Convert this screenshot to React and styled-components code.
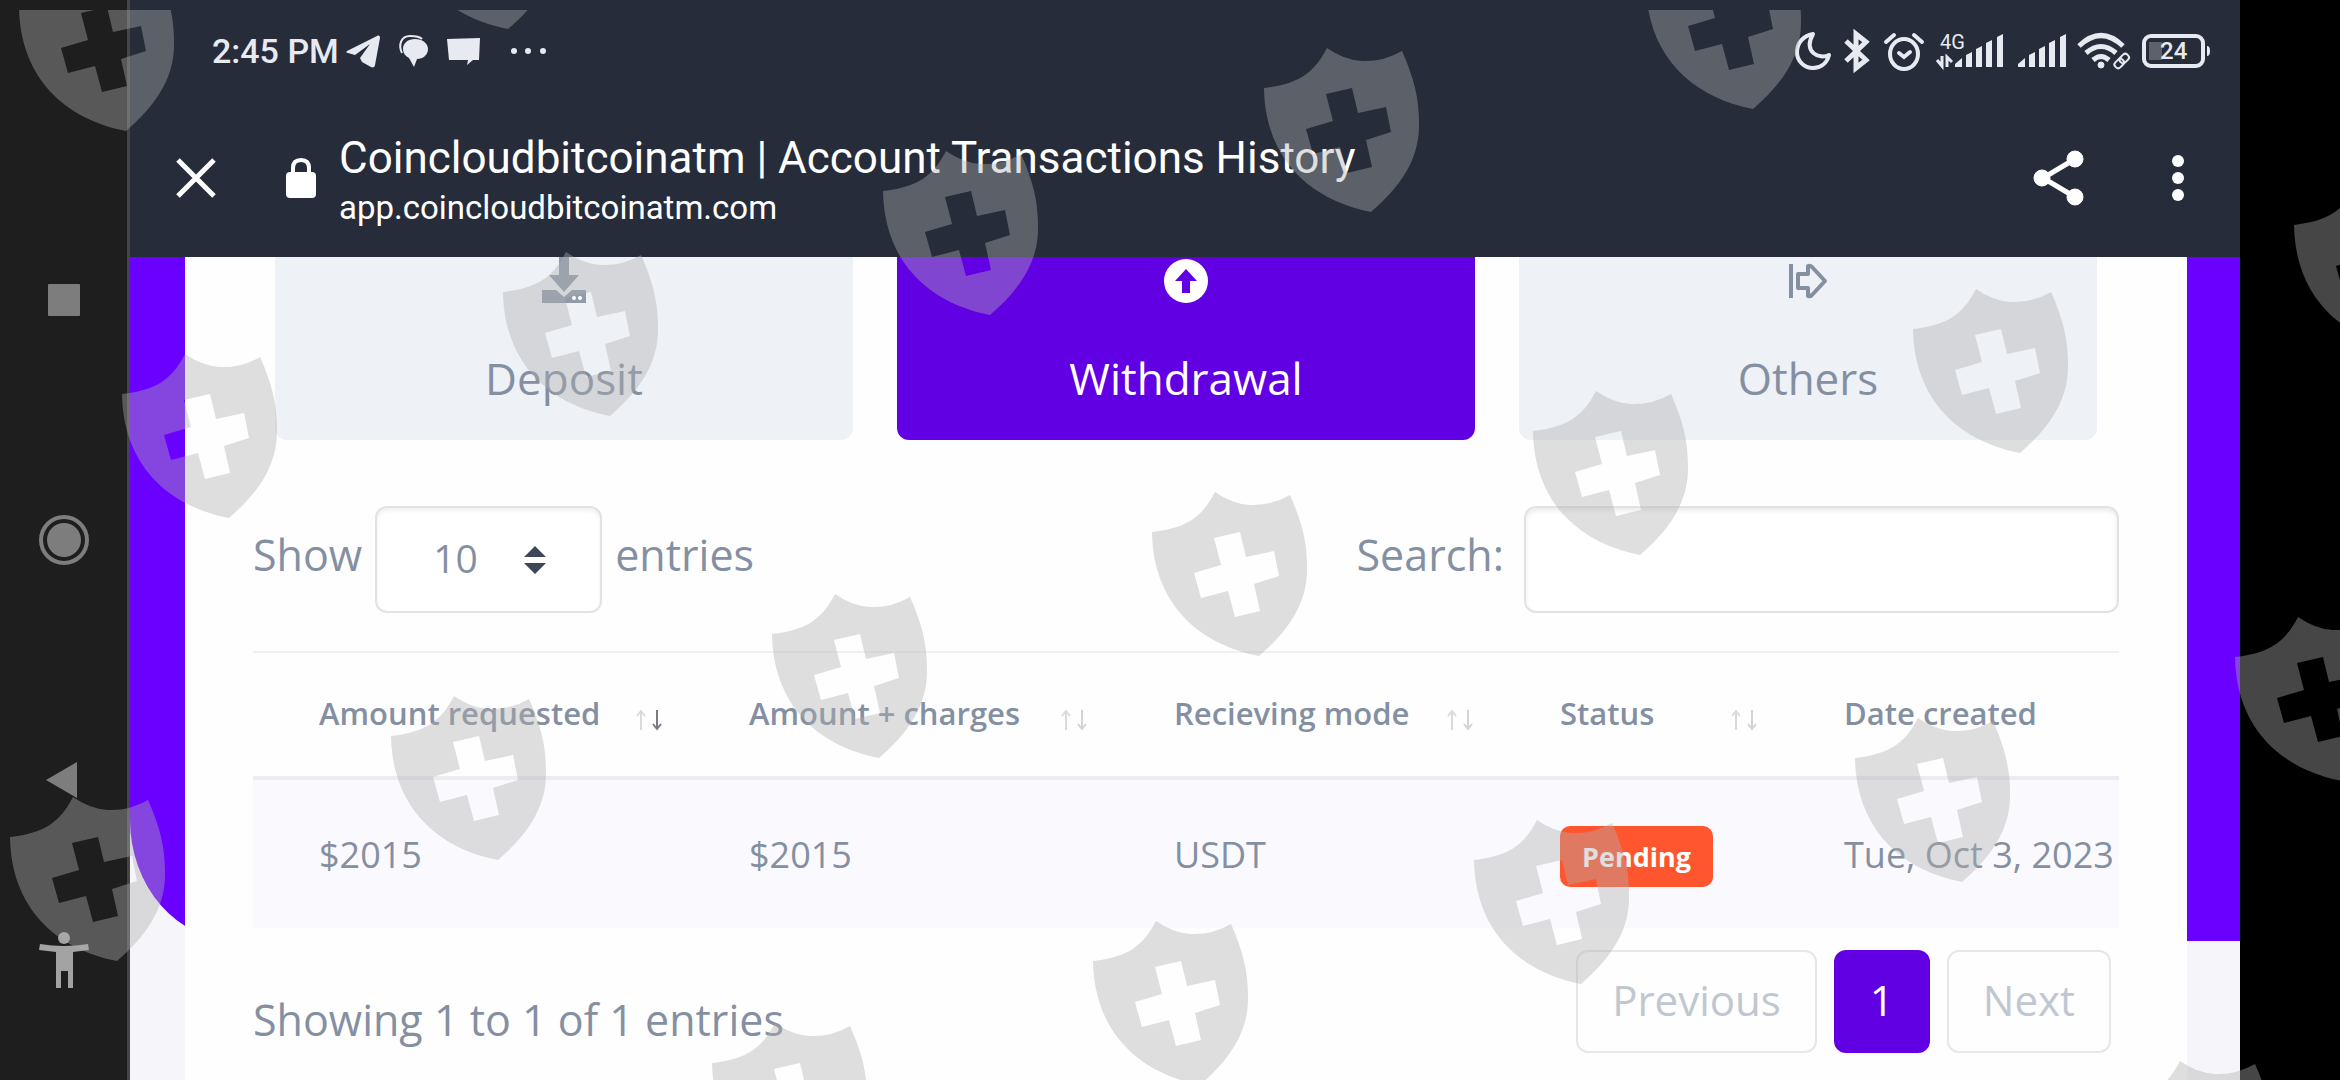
import React, { useState } from 'react'
import styled, { createGlobalStyle } from 'styled-components'

const GlobalStyle = createGlobalStyle`
    * {
        box-sizing: border-box;
    }

    body {
        margin: 0;
        background: #000;
        color: #8490a2;
        font-family: "Open Sans", "Noto Sans", sans-serif;
    }

    button, input, select {
        font: inherit;
        color: inherit;
    }
`

const Screen = styled.div`
    display: flex;
    min-height: 100vh;
    padding-right: 100px;
    overflow: hidden;
`

const Rail = styled.nav`
    flex: 0 0 130px;
    display: flex;
    flex-direction: column;
    padding-top: 180px;
    background: #1e1e1e;
    border-right: 3px solid #454545;
`

const RailButton = styled.button`
    display: flex;
    align-items: center;
    justify-content: center;
    height: ${props => props.$short ? '120px' : '240px'};
    padding: 0;
    border: 0;
    background: none;
`

const Main = styled.div`
    flex: 1;
    min-width: 0;
    display: flex;
    flex-direction: column;
`

const Header = styled.header`
    height: 257px;
    background: #262c3a;
    color: #fff;
    font-family: Roboto, sans-serif;
`

const StatusBar = styled.div`
    display: flex;
    justify-content: space-between;
    height: 102px;
    padding: 0 30px 0 82px;
    color: #e8eaf2;
`

const StatusGroup = styled.div`
    display: flex;
    align-items: center;
    gap: ${props => props.$gap};

    svg {
        display: block;
        overflow: visible;
    }
`

const Clock = styled.span`
    margin-right: -12px;
    font-size: 34px;
    font-weight: 500;
    line-height: 40px;
`

const AddressBar = styled.div`
    display: flex;
    align-items: center;
    height: 155px;
    padding: 0 0 4px 45px;
`

const BarButton = styled.button`
    display: flex;
    align-items: center;
    justify-content: center;
    width: ${props => props.$width};
    height: 80px;
    padding: 0;
    border: 0;
    background: none;
`

const MenuButton = styled(BarButton)`
    margin-left: 31px;
`

const LockIcon = styled.svg`
    margin: 0 22px 0 68px;
`

const PageInfo = styled.div`
    flex: 1;
    min-width: 0;
    padding-top: 8px;
    white-space: nowrap;
`

const PageTitle = styled.div`
    font-size: 44px;
    line-height: 52px;
`

const PageUrl = styled.div`
    font-size: 33px;
    line-height: 48px;
`

const Content = styled.main`
    flex: 1;
    display: grid;
    background: #f5f5fa;
`

const Hero = styled.div`
    grid-area: 1 / 1;
    height: 684px;
    background: #6a00ff;
    border-bottom-left-radius: 106px 121px;
`

const Card = styled.section`
    grid-area: 1 / 1;
    margin: 0 53px 0 55px;
    padding: 0 68px 27px;
    background: #fefefe;
`

const Tiles = styled.div`
    display: grid;
    grid-template-columns: repeat(3, 1fr);
    gap: 44px;
    padding: 0 22px;
`

const Tile = styled.button`
    display: flex;
    flex-direction: column;
    align-items: center;
    height: 183px;
    padding: 0;
    border: 0;
    border-radius: 0 0 12px 12px;
    background: ${props => props.$active ? '#6200e4' : '#eef1f6'};
    color: ${props => props.$active ? '#fff' : '#8490a2'};
    font-size: 44px;
    line-height: 60px;

    svg {
        display: block;
        margin-bottom: 45px;
    }
`

const Controls = styled.div`
    display: flex;
    justify-content: space-between;
    margin: 66px 0 38px;
    font-size: 43px;
`

const Control = styled.label`
    display: flex;
    align-items: center;
    gap: ${props => props.$gap};
`

const ControlText = styled.span`
    padding-bottom: 10px;
`

const SelectBox = styled.span`
    display: grid;
    align-items: center;

    svg {
        grid-area: 1 / 1;
        justify-self: end;
        margin-right: 56px;
        pointer-events: none;
    }
`

const Select = styled.select`
    grid-area: 1 / 1;
    width: 227px;
    height: 107px;
    padding: 0 56px 4px;
    border: 2px solid #e2e2e4;
    border-radius: 12px;
    background: #fff;
    box-shadow: inset 0 3px 4px rgba(0, 0, 0, 0.06);
    font-size: 39px;
    appearance: none;
`

const SearchInput = styled.input`
    width: 595px;
    height: 107px;
    padding: 0 32px;
    border: 2px solid #e2e2e4;
    border-radius: 12px;
    background: #fff;
    box-shadow: inset 0 3px 4px rgba(0, 0, 0, 0.08);
    font-size: 39px;
`

const Table = styled.table`
    width: 100%;
    table-layout: fixed;
    border-spacing: 0;
    text-align: left;
    white-space: nowrap;
`

const Col = styled.col`
    width: ${props => props.$width};
`

const Th = styled.th`
    height: 129px;
    padding: 0 20px 0 66px;
    border-top: 2px solid #f0f0f3;
    border-bottom: 4px solid #ecedf3;
    font-size: 31px;
    font-weight: 600;
`

const HeadCell = styled.div`
    display: flex;
    align-items: center;
    justify-content: space-between;
    padding-bottom: 4px;

    svg {
        flex: none;
        margin-top: 14px;
    }
`

const Td = styled.td`
    height: 148px;
    padding: 0 0 0 66px;
    background: #fafafe;
    font-size: 36px;
`

const Badge = styled.span`
    display: block;
    width: max-content;
    margin-top: 4px;
    padding: 0 22px;
    border-radius: 10px;
    background: #ff562f;
    color: #fff;
    font-size: 27px;
    font-weight: 700;
    line-height: 61px;
`

const Footer = styled.div`
    display: flex;
    align-items: flex-end;
    justify-content: space-between;
    padding: 22px 8px 0 0;
`

const Summary = styled.div`
    font-size: 43px;
    line-height: 66px;
`

const Pagination = styled.div`
    display: flex;
    gap: 17px;
`

const PageButton = styled.button`
    height: 103px;
    padding: 0 34px 4px;
    border: 2px solid ${props => props.$active ? '#6200e4' : '#e6e7ea'};
    border-radius: 12px;
    background: ${props => props.$active ? '#6200e4' : '#fefefe'};
    color: ${props => props.$active ? '#fff' : '#c0c7d1'};
    font-size: 42px;
`

const Watermark = styled.svg`
    position: fixed;
    inset: 10px 0 0 0;
    width: 100%;
    height: calc(100% - 10px);
    pointer-events: none;
`

const shields = [
    [19, -33], [401, -135], [1646, -55], [1264, 48], [883, 151],
    [503, 252], [122, 354], [1913, 289], [1533, 391], [1152, 492],
    [772, 594], [391, 696], [10, 797], [1855, 718], [1474, 820],
    [1093, 921], [712, 1023], [2117, 1061], [2294, 185], [2235, 617]
]

const columns = [
    { title: 'Amount requested', width: '430px', sorted: true },
    { title: 'Amount + charges', width: '425px' },
    { title: 'Recieving mode', width: '386px' },
    { title: 'Status', width: '284px' },
    { title: 'Date created', width: '341px', last: true }
]

const SortArrows = ({ sorted }) => (
    <svg width="28" height="22" fill="none" strokeWidth="2">
        <path d="M6 21V2M2 7l4-5 4 5" stroke="#d9dade" />
        <path d="M22 1v19M18 15l4 5 4-5" stroke={sorted ? '#777b82' : '#d2d3d7'} />
    </svg>
)

const SignalBars = () => (
    <svg width="49" height="36" fill="currentColor">
        <path d="M0 34v-3l7-6v9zM11 34V22l6-3v15zM21 34V16l6-3v21zM31 34V10l6-3v27zM42 34V4l6-3v33z" />
    </svg>
)

const StatusLeft = () => (
    <StatusGroup $gap="19px">
        <Clock>2:45 PM</Clock>
        <svg width="34" height="34" fill="currentColor">
            <path d="M1 17 31 2c2-1 3 0 3 2l-5 27c0 2-2 3-4 2l-9-5-2-4 10-14L9 21l-7-2c-2 0-2-1-1-2z" />
        </svg>
        <svg width="29" height="32" fill="currentColor">
            <path d="M16 4c7 0 13 4 13 10 0 6-5 10-11 10l-3 8-5-9C6 21 4 18 4 14 4 8 9 4 16 4z" />
            <path d="M3 18C-1 10 2 1 11 1c5 0 9 0 12 3" fill="none" stroke="currentColor" strokeWidth="2" />
        </svg>
        <svg width="33" height="28" fill="currentColor">
            <path d="m0 2 33-1-1 22h-6l-6 5 1-5H2z" />
        </svg>
        <svg width="58" height="10" fill="currentColor">
            <circle cx="15" cy="5" r="3" />
            <circle cx="29" cy="5" r="3" />
            <circle cx="44" cy="5" r="3" />
        </svg>
    </StatusGroup>
)

const StatusRight = () => (
    <StatusGroup $gap="12px">
        <svg width="36" height="38" fill="none" stroke="currentColor" strokeWidth="4" strokeLinejoin="round">
            <path d="M17 2C7 4 1 11 1 20c0 9 7 16 16 16 8 0 14-5 16-13-10 5-26-3-16-21z" />
        </svg>
        <svg width="28" height="40" fill="none" stroke="currentColor" strokeWidth="5">
            <path d="m2 10 20 19-10 8V3l10 8L2 30" />
        </svg>
        <svg width="42" height="40" fill="none" stroke="currentColor" strokeWidth="4" strokeLinecap="round">
            <ellipse cx="20" cy="23" rx="14" ry="15" />
            <path d="m2 11 8-7M38 11l-8-7M15 22l5 4 6-5" />
        </svg>
        <svg width="68" height="40">
            <text x="2" y="18" fontSize="20" fill="currentColor" fontFamily="Roboto, sans-serif">4G</text>
            <path d="m-1 29 5 6V25M14 31l-5-5v10" fill="none" stroke="currentColor" strokeWidth="3" />
            <g fill="currentColor">
                <path d="M17 36v-3l7-6v9zM28 36V24l6-3v15zM38 36V18l6-3v21zM48 36V12l6-3v27zM59 36V6l6-3v33z" />
            </g>
        </svg>
        <SignalBars />
        <svg width="51" height="38" fill="none" stroke="currentColor" strokeWidth="4">
            <path d="M0 14Q22-7 44 14" strokeWidth="5" />
            <path d="M7 21q15-13 30 0M14 28q8-7 16 0" strokeWidth="5" />
            <circle cx="22" cy="33" r="3" fill="currentColor" strokeWidth="1" />
            <g strokeWidth="2" transform="rotate(-45 42 29)">
                <rect x="34" y="26" width="10" height="7" rx="3" />
                <rect x="41" y="26" width="10" height="7" rx="3" />
            </g>
        </svg>
        <svg width="68" height="32" fill="currentColor">
            <rect x="2" y="1" width="59" height="30" rx="7" fill="none" stroke="currentColor" strokeWidth="4" />
            <path d="M7 7h13v18H7z" fill="#5c616b" />
            <path d="M65 11q3 0 3 5t-3 5z" />
            <text x="18" y="24" fontSize="24" fontWeight="500" fontFamily="Roboto, sans-serif">24</text>
        </svg>
    </StatusGroup>
)

const App = () => {
    const [tab, setTab] = useState('Withdrawal')
    const [length, setLength] = useState('10')
    const [query, setQuery] = useState('')

    return (
        <Screen>
            <GlobalStyle />
            <Rail>
                <RailButton aria-label="Recent apps">
                    <svg width="34" height="34"><rect x="1" y="1" width="32" height="32" rx="1" fill="#7d7d7d" /></svg>
                </RailButton>
                <RailButton aria-label="Home">
                    <svg width="50" height="50">
                        <circle cx="25" cy="25" r="23" fill="none" stroke="#7d7d7d" strokeWidth="4" />
                        <circle cx="25" cy="25" r="17" fill="#7d7d7d" />
                    </svg>
                </RailButton>
                <RailButton aria-label="Back">
                    <svg width="38" height="38"><path d="M1 19 32 1v36z" fill="#7d7d7d" /></svg>
                </RailButton>
                <RailButton $short aria-label="Accessibility">
                    <svg width="50" height="56" fill="#a3a3a3">
                        <circle cx="25" cy="6" r="6" />
                        <path d="M1 12q24 4 48 0l1 6-16 2v36h-5V39h-7v17h-5V20L0 18z" />
                    </svg>
                </RailButton>
            </Rail>
            <Main>
                <Header>
                    <StatusBar>
                        <StatusLeft />
                        <StatusRight />
                    </StatusBar>
                    <AddressBar>
                        <BarButton $width="42px" aria-label="Close">
                            <svg width="40" height="40" stroke="#fff" strokeWidth="5"><path d="M2 2l36 36M38 2 2 38" /></svg>
                        </BarButton>
                        <LockIcon width="32" height="40" fill="#fff">
                            <rect x="1" y="14" width="30" height="26" rx="4" />
                            <path d="M8 15v-5q0-8 8-8t8 8v5" fill="none" stroke="#fff" strokeWidth="4" />
                        </LockIcon>
                        <PageInfo>
                            <PageTitle>Coincloudbitcoinatm | Account Transactions History</PageTitle>
                            <PageUrl>app.coincloudbitcoinatm.com</PageUrl>
                        </PageInfo>
                        <BarButton $width="52px" aria-label="Share">
                            <svg width="52" height="56" fill="#fff" stroke="#fff">
                                <path d="M42 9 10 28l32 19" fill="none" strokeWidth="5" />
                                <circle cx="42" cy="9" r="8" />
                                <circle cx="9" cy="28" r="8" />
                                <circle cx="42" cy="47" r="8" />
                            </svg>
                        </BarButton>
                        <MenuButton $width="124px" aria-label="More options">
                            <svg width="12" height="46" fill="#fff">
                                <circle cx="6" cy="6" r="6" />
                                <circle cx="6" cy="23" r="6" />
                                <circle cx="6" cy="40" r="6" />
                            </svg>
                        </MenuButton>
                    </AddressBar>
                </Header>
                <Content>
                    <Hero />
                    <Card>
                        <Tiles>
                            <Tile $active={tab === 'Deposit'} onClick={() => setTab('Deposit')}>
                                <svg width="46" height="46" fill="#909bac">
                                    <path d="M1 33h14l8 7 8-7h14v13H1z" />
                                    <path d="M18 0h10v18h10L23 35 8 18h10z" />
                                    <circle cx="33" cy="41" r="2" fill="#fff" />
                                    <circle cx="39" cy="41" r="2" fill="#fff" />
                                </svg>
                                Deposit
                            </Tile>
                            <Tile $active={tab === 'Withdrawal'} onClick={() => setTab('Withdrawal')}>
                                <svg width="46" height="46">
                                    <circle cx="23" cy="24" r="22" fill="#fff" />
                                    <path d="M23 12 34 24h-7v12h-8V24h-7z" fill="#6200e4" />
                                </svg>
                                Withdrawal
                            </Tile>
                            <Tile $active={tab === 'Others'} onClick={() => setTab('Others')}>
                                <svg width="46" height="46" fill="none" stroke="#8490a2" strokeWidth="4" strokeLinejoin="round">
                                    <path d="M6 7v34" />
                                    <path d="M13 17h10V9q2-1 4 1l13 14-13 14q-2 2-4 1v-8H13z" />
                                </svg>
                                Others
                            </Tile>
                        </Tiles>
                        <Controls>
                            <Control $gap="13px">
                                <ControlText>Show</ControlText>
                                <SelectBox>
                                    <Select value={length} onChange={e => setLength(e.target.value)}>
                                        <option>10</option>
                                        <option>25</option>
                                        <option>50</option>
                                        <option>100</option>
                                    </Select>
                                    <svg width="22" height="28" fill="#3d4757"><path d="M0 11 11 0l11 11zM0 17h22L11 28z" /></svg>
                                </SelectBox>
                                <ControlText>entries</ControlText>
                            </Control>
                            <Control $gap="20px">
                                <ControlText>Search:</ControlText>
                                <SearchInput type="search" value={query} onChange={e => setQuery(e.target.value)} />
                            </Control>
                        </Controls>
                        <Table>
                            <colgroup>
                                {columns.map(col => <Col key={col.title} $width={col.width} />)}
                            </colgroup>
                            <thead>
                                <tr>
                                    {columns.map(col => (
                                        <Th key={col.title}>
                                            <HeadCell>
                                                {col.title}
                                                {!col.last && <SortArrows sorted={col.sorted} />}
                                            </HeadCell>
                                        </Th>
                                    ))}
                                </tr>
                            </thead>
                            <tbody>
                                <tr>
                                    <Td>$2015</Td>
                                    <Td>$2015</Td>
                                    <Td>USDT</Td>
                                    <Td><Badge>Pending</Badge></Td>
                                    <Td>Tue, Oct 3, 2023</Td>
                                </tr>
                            </tbody>
                        </Table>
                        <Footer>
                            <Summary>Showing 1 to 1 of 1 entries</Summary>
                            <Pagination>
                                <PageButton disabled>Previous</PageButton>
                                <PageButton $active>1</PageButton>
                                <PageButton disabled>Next</PageButton>
                            </Pagination>
                        </Footer>
                    </Card>
                </Content>
            </Main>
            <Watermark fill="#aeaeae" fillOpacity="0.4" fillRule="evenodd" aria-hidden="true">
                {shields.map(([x, y]) => (
                    <path
                        key={`${x}-${y}`}
                        transform={`translate(${x} ${y - 10})`}
                        d="M63 0Q80 12 98 13 119 14 138 3C150 30 155 50 155 75 156 112 135 140 107 164 45 152 1 110 0 40 35 36 50 25 63 0zM62 46 88 40 94 65 122 59 127 84 102 92 108 119 83 125 76 99 49 106 42 81 69 73z"
                    />
                ))}
            </Watermark>
        </Screen>
    )
}

export default App
